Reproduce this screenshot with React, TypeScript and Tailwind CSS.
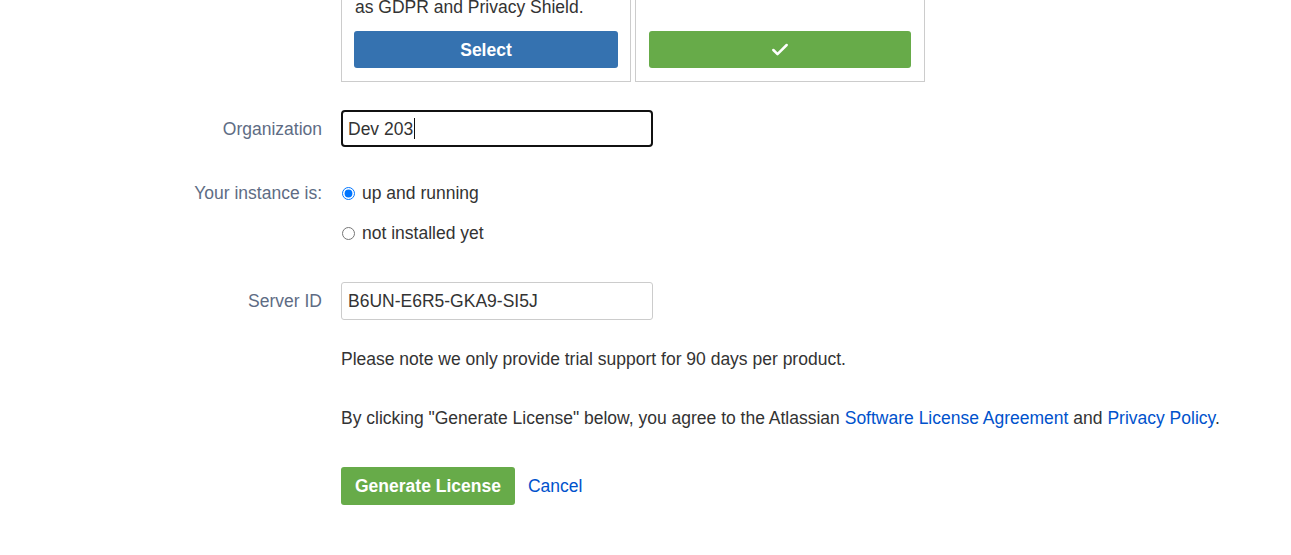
import { Check } from "lucide-react";

const font = { fontFamily: '"Liberation Sans", Arial, sans-serif' };

function Label({ children }: { children: React.ReactNode }) {
  return (
    <div className="w-[322px] shrink-0 text-right text-[#5e6c84]">
      {children}
    </div>
  );
}

export default function App() {
  return (
    <div
      className="min-h-[555px] bg-white text-[17.5px] leading-5 text-[#333333]"
      style={font}
    >
      {/* Plan cards (top cut off) */}
      <div className="ml-[341px] -mt-[3px] flex gap-[4px]">
        <div className="w-[290px] border border-t-0 border-[#cccccc] px-[12px] pb-[13px]">
          <p className="h-5 pl-px">as GDPR and Privacy Shield.</p>
          <button className="mt-[14px] flex h-[37px] w-full items-center justify-center rounded-[3px] bg-[#3572b0] font-bold text-white">
            Select
          </button>
        </div>
        <div className="w-[290px] border border-t-0 border-[#cccccc] px-[13px] pb-[13px]">
          <div className="h-5" />
          <button className="mt-[14px] flex h-[37px] w-full items-center justify-center rounded-[3px] bg-[#67ab49] text-white">
            <Check size={20} strokeWidth={3} />
          </button>
        </div>
      </div>

      {/* Organization */}
      <div className="mt-[28px] flex items-center gap-[19px]">
        <Label>Organization</Label>
        <div className="flex h-[37px] w-[312px] items-center rounded-[4px] border-2 border-[#111111] px-[5px]">
          <span>Dev 203</span>
          <span className="ml-px h-[21px] w-px bg-[#111111]" />
        </div>
      </div>

      {/* Instance status */}
      <div className="mt-[36px] flex gap-[19px]">
        <Label>Your instance is:</Label>
        <div className="flex flex-col gap-5">
          <label className="flex items-center gap-[7px]">
            <input
              type="radio"
              name="instance"
              defaultChecked
              className="m-0 ml-px h-[13px] w-[13px] accent-[#0075ff]"
            />
            <span>up and running</span>
          </label>
          <label className="flex items-center gap-[7px]">
            <input
              type="radio"
              name="instance"
              className="m-0 ml-px h-[13px] w-[13px]"
            />
            <span>not installed yet</span>
          </label>
        </div>
      </div>

      {/* Server ID */}
      <div className="mt-[39px] flex items-center gap-[19px]">
        <Label>Server ID</Label>
        <div className="flex h-[38px] w-[312px] items-center rounded-[3px] border border-[#cccccc] px-[6px]">
          B6UN-E6R5-GKA9-SI5J
        </div>
      </div>

      <div className="ml-[341px]">
        <p className="mt-[29px]">
          Please note we only provide trial support for 90 days per product.
        </p>
        <p className="mt-[39px]">
          By clicking "Generate License" below, you agree to the Atlassian{" "}
          <a className="text-[#0052cc]">Software License Agreement</a> and{" "}
          <a className="text-[#0052cc]">Privacy Policy</a>.
        </p>
        <div className="mt-[39px] flex items-center gap-[13px]">
          <button className="h-[38px] rounded-[3px] bg-[#67ab49] px-[14px] font-bold text-white">
            Generate License
          </button>
          <a className="text-[#0052cc]">Cancel</a>
        </div>
      </div>
    </div>
  );
}
